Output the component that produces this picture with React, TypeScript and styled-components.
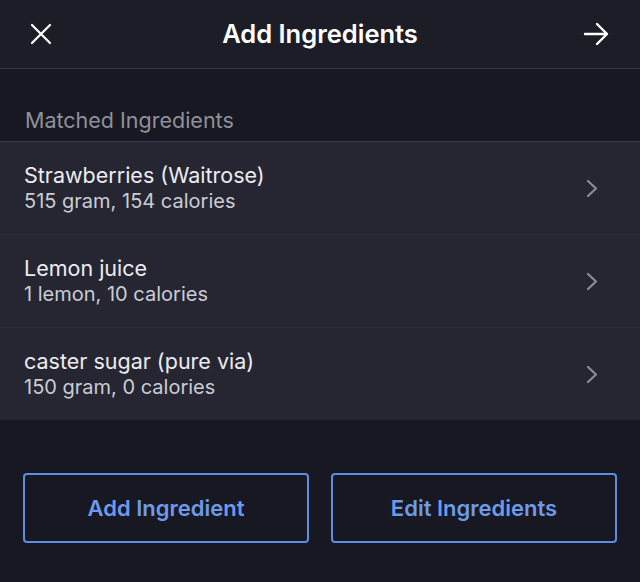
import React from "react";
import styled, { createGlobalStyle } from "styled-components";

const Global = createGlobalStyle`
  html, body { margin: 0; padding: 0; background: #171821; }
  body { font-family: Inter, "Noto Sans", sans-serif; -webkit-font-smoothing: antialiased; }
  #root { min-height: 100vh; }
`;

const Screen = styled.div`
  width: 640px;
  height: 582px;
  background: #171821;
  display: flex;
  flex-direction: column;
  overflow: hidden;
`;

const Header = styled.header`
  height: 69px;
  box-sizing: border-box;
  background: #1c1d27;
  border-bottom: 1px solid #363845;
  display: grid;
  grid-template-columns: 80px 1fr 80px;
  align-items: center;
`;

const IconButton = styled.button<{ $align: "start" | "end" }>`
  background: none;
  border: none;
  padding: 0;
  color: #ffffff;
  display: flex;
  justify-content: ${(p) => (p.$align === "start" ? "flex-start" : "flex-end")};
  padding-left: ${(p) => (p.$align === "start" ? "30px" : "0")};
  padding-right: ${(p) => (p.$align === "end" ? "31px" : "0")};
  margin-top: -1px;
`;

const Title = styled.h1`
  margin: 0;
  text-align: center;
  color: #ffffff;
  font-size: 25.5px;
  font-weight: 600;
  margin-top: -1px;
`;

const SectionLabel = styled.div`
  padding: 38px 25px 8px;
  color: #8f919b;
  font-size: 21.5px;
  line-height: 26px;
  border-bottom: 1px solid #393b48;
`;

const List = styled.ul`
  list-style: none;
  margin: 0;
  padding: 0;
  background: #252632;
`;

const Row = styled.li<{ $last?: boolean }>`
  box-sizing: border-box;
  display: flex;
  align-items: center;
  justify-content: space-between;
  padding: 0 42px 0 24px;
  border-bottom: ${(p) => (p.$last ? "none" : "1px solid #2c2d39")};
  height: ${(p) => (p.$last ? "92px" : "93px")};
`;

const RowText = styled.div`
  display: flex;
  flex-direction: column;
  gap: 1px;
`;

const RowTitle = styled.span`
  color: #ececf0;
  font-size: 21.5px;
  line-height: 25px;
`;

const RowSub = styled.span`
  color: #cbccd2;
  font-size: 20px;
  line-height: 24px;
`;

const Actions = styled.div`
  display: flex;
  gap: 22px;
  padding: 53px 23px 0;
`;

const OutlineButton = styled.button`
  flex: 1;
  height: 70px;
  box-sizing: border-box;
  background: transparent;
  border: 2.5px solid #5d8ce3;
  border-radius: 4px;
  color: #6d9aea;
  font-family: Inter, "Noto Sans", sans-serif;
  font-size: 22px;
  font-weight: 600;
`;

const CloseIcon = () => (
  <svg width="22" height="22" viewBox="0 0 22 22" fill="none">
    <path d="M2 2L20 20M20 2L2 20" stroke="#fff" strokeWidth="2.2" strokeLinecap="round" />
  </svg>
);

const ArrowIcon = () => (
  <svg width="26" height="24" viewBox="0 0 26 24" fill="none">
    <path d="M2 12H24M14 2L24 12L14 22" stroke="#fff" strokeWidth="2.4" strokeLinecap="round" strokeLinejoin="round" />
  </svg>
);

const Chevron = () => (
  <svg width="12" height="19" viewBox="0 0 12 19" fill="none">
    <path d="M2 2L10 9.5L2 17" stroke="#8c8d96" strokeWidth="2.2" strokeLinecap="round" strokeLinejoin="round" />
  </svg>
);

const items = [
  { name: "Strawberries (Waitrose)", detail: "515 gram, 154 calories" },
  { name: "Lemon juice", detail: "1 lemon, 10 calories" },
  { name: "caster sugar (pure via)", detail: "150 gram, 0 calories" },
];

export default function App() {
  return (
    <>
      <Global />
      <Screen>
        <Header>
          <IconButton $align="start" aria-label="Close">
            <CloseIcon />
          </IconButton>
          <Title>Add Ingredients</Title>
          <IconButton $align="end" aria-label="Next">
            <ArrowIcon />
          </IconButton>
        </Header>
        <SectionLabel>Matched Ingredients</SectionLabel>
        <List>
          {items.map((it, i) => (
            <Row key={it.name} $last={i === items.length - 1}>
              <RowText>
                <RowTitle>{it.name}</RowTitle>
                <RowSub>{it.detail}</RowSub>
              </RowText>
              <Chevron />
            </Row>
          ))}
        </List>
        <Actions>
          <OutlineButton>Add Ingredient</OutlineButton>
          <OutlineButton>Edit Ingredients</OutlineButton>
        </Actions>
      </Screen>
    </>
  );
}
